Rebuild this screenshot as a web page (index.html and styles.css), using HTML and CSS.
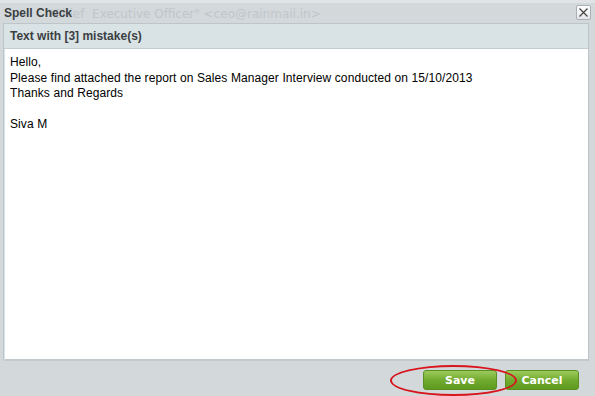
FILE: index.html
```html
<!DOCTYPE html>
<html lang="en">

<head>
  <meta charset="UTF-8">
  <meta name="viewport" content="width=device-width, initial-scale=1.0">
  <title>Spell Check</title>

  <link rel="stylesheet" href="styles.css">
</head>

<body>
  <div class="dialog">
    <div class="top-line"></div>
    <div class="title-bar">
      <span class="ghost">"Chief&nbsp; Executive Officer" &lt;ceo@rainmail.in&gt;</span>
      <span class="title">Spell Check</span>
      <button class="close-btn" title="Close">
        <svg width="9" height="9" viewBox="0 0 9 9">
          <path d="M0.5 0.5 L8.5 8.5 M8.5 0.5 L0.5 8.5" stroke="#444" stroke-width="1.2" fill="none" />
        </svg>
      </button>
    </div>

    <section class="panel">
      <div class="panel-head">Text with [3] mistake(s)</div>
      <div class="panel-body">
        <p>Hello,</p>
        <p>Please find attached the report on Sales Manager Interview conducted on 15/10/2013</p>
        <p>Thanks and Regards</p>
        <p>&nbsp;</p>
        <p>Siva M</p>
      </div>
    </section>

    <div class="actions">
      <button class="btn save">Save</button>
      <button class="btn">Cancel</button>
      <span class="mark"></span>
    </div>
  </div>
</body>

</html>
```

FILE: styles.css
```css
body {
  margin: 0;
  background: #d3d8db;
  font-family: "Liberation Sans", Arial, sans-serif;
}

.dialog {
  width: 595px;
  height: 396px;
  overflow: hidden;
}

.top-line {
  height: 3px;
  background: #e0e4e6;
}

.title-bar {
  position: relative;
  display: flex;
  align-items: center;
  height: 20px;
  padding: 0 4px;
}

.title {
  position: relative;
  font-size: 12px;
  font-weight: bold;
  color: #3b3f42;
}

.ghost {
  position: absolute;
  left: 48px;
  top: 4px;
  font-family: "DejaVu Sans", Verdana, sans-serif;
  font-size: 12px;
  color: #c0c6ca;
  white-space: nowrap;
}

.close-btn {
  position: absolute;
  right: 4px;
  top: 2px;
  width: 15px;
  height: 15px;
  padding: 0;
  display: flex;
  align-items: center;
  justify-content: center;
  background: linear-gradient(#ffffff, #e4e7e9);
  border: 1px solid #a9b1b5;
  border-radius: 2px;
}

.panel {
  margin: 0 6px 0 3px;
  border: 1px solid #bcc6ca;
  border-bottom: none;
  background: #d9e3e5;
}

.panel-head {
  height: 24px;
  line-height: 24px;
  padding-left: 6px;
  font-size: 12px;
  font-weight: bold;
  color: #3b3f42;
  border-bottom: 1px solid #c3ccd0;
}

.panel-body {
  height: 300px;
  margin-left: 1px;
  padding: 6px 5px 4px;
  background: #ffffff;
  border-bottom: 2px solid #c2c9cd;
  font-size: 12px;
  letter-spacing: 0.1px;
  color: #000;
}

.panel-body p {
  margin: 0;
  line-height: 15.5px;
}

.actions {
  position: relative;
  display: flex;
  justify-content: flex-end;
  gap: 8px;
  padding: 9px 16px 0 0;
}

.btn {
  width: 74px;
  height: 20px;
  padding: 0;
  font-family: Tahoma, "DejaVu Sans", sans-serif;
  font-size: 11px;
  font-weight: bold;
  color: #ffffff;
  background: linear-gradient(#9ccb5c, #72ab2f 50%, #5d9a1d);
  border: 1px solid #5b8f22;
  border-radius: 3px;
}

.mark {
  position: absolute;
  left: 390px;
  top: 4px;
  width: 123px;
  height: 27px;
  border: 2px solid #d8141c;
  border-radius: 50%;
}
```
